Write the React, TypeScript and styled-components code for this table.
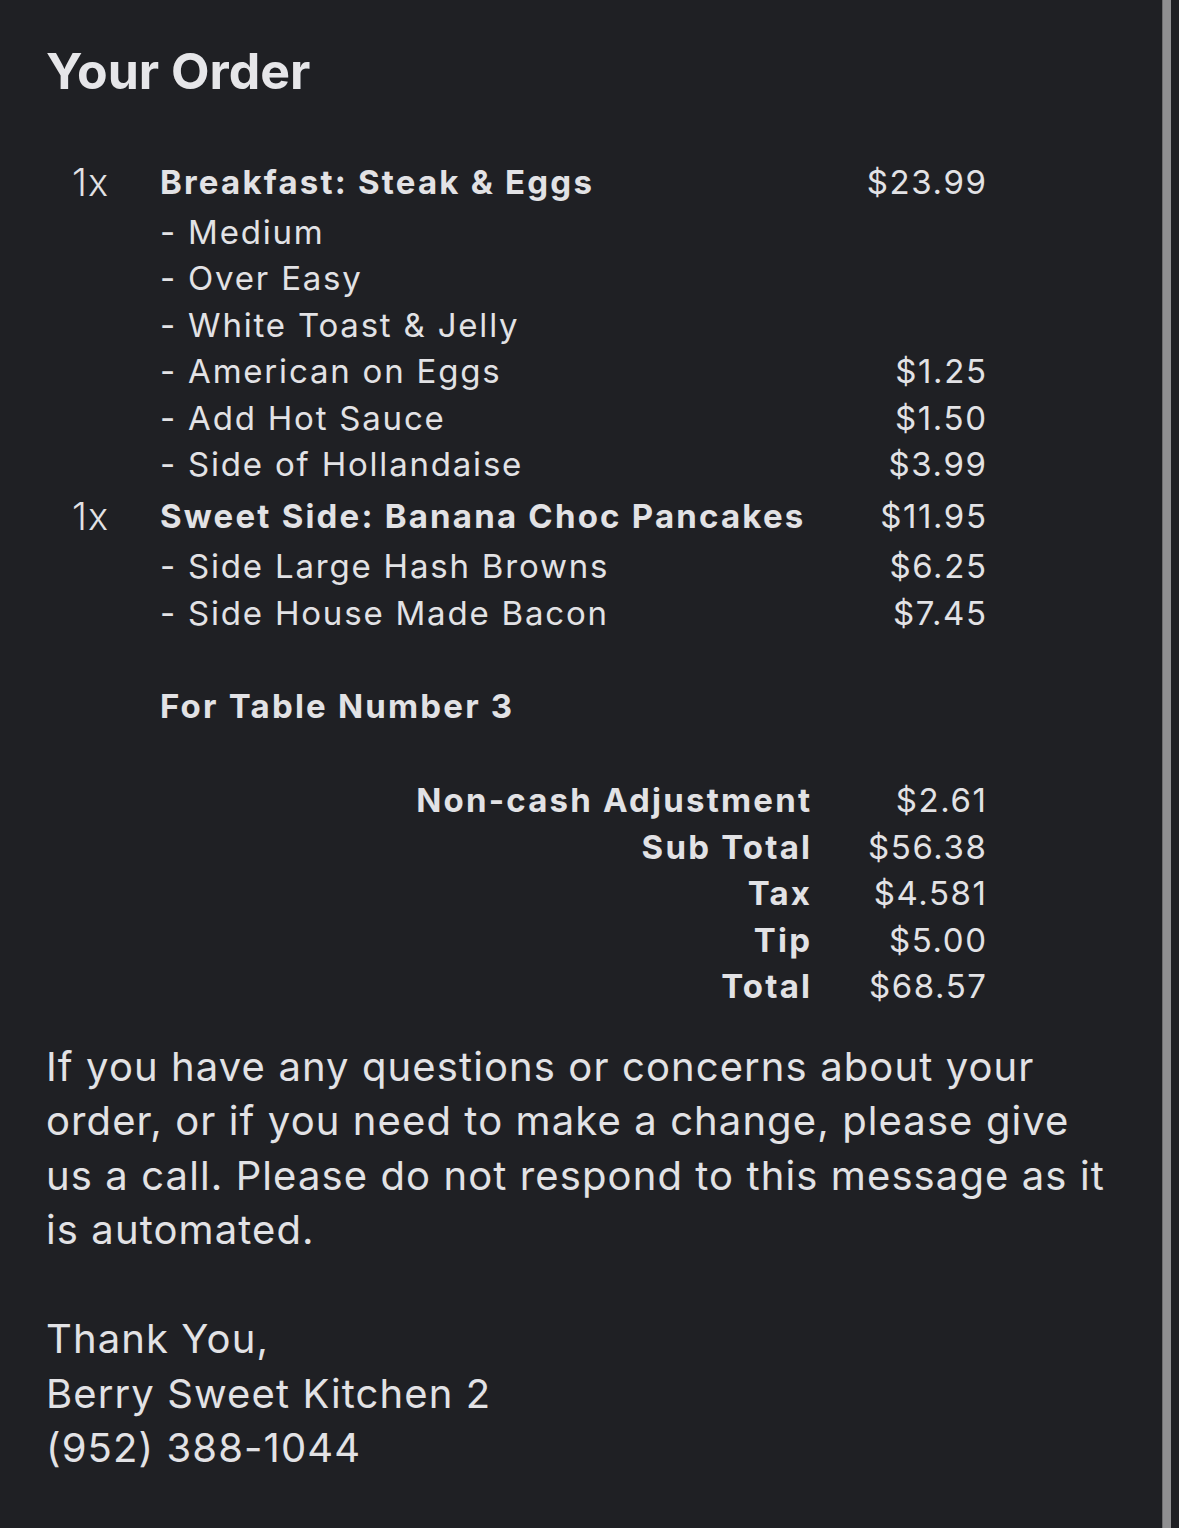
import styled, { createGlobalStyle } from "styled-components";

const GlobalStyle = createGlobalStyle`
  html, body {
    margin: 0;
    padding: 0;
    background: #1f2024;
  }
  body {
    font-family: Inter, "Noto Sans", sans-serif;
    color: #e2e2e5;
  }
`;

type Line = { text: string; price?: string };
type Item = { qty: string; name: string; price: string; options: Line[] };

const items: Item[] = [
  {
    qty: "1x",
    name: "Breakfast: Steak & Eggs",
    price: "$23.99",
    options: [
      { text: "- Medium" },
      { text: "- Over Easy" },
      { text: "- White Toast & Jelly" },
      { text: "- American on Eggs", price: "$1.25" },
      { text: "- Add Hot Sauce", price: "$1.50" },
      { text: "- Side of Hollandaise", price: "$3.99" },
    ],
  },
  {
    qty: "1x",
    name: "Sweet Side: Banana Choc Pancakes",
    price: "$11.95",
    options: [
      { text: "- Side Large Hash Browns", price: "$6.25" },
      { text: "- Side House Made Bacon", price: "$7.45" },
    ],
  },
];

const totals = [
  { label: "Non-cash Adjustment", value: "$2.61" },
  { label: "Sub Total", value: "$56.38" },
  { label: "Tax", value: "$4.581" },
  { label: "Tip", value: "$5.00" },
  { label: "Total", value: "$68.57" },
];

const App = () => {
  return (
    <Page>
      <GlobalStyle />
      <Main>
        <Title>Your Order</Title>
        <OrderList>
          {items.map((item, i) => (
            <ItemBlock key={i} $first={i === 0}>
              <HeadRow>
                <Qty>{item.qty}</Qty>
                <ItemName>{item.name}</ItemName>
                <Price>{item.price}</Price>
              </HeadRow>
              {item.options.map((opt, j) => (
                <OptionRow key={j}>
                  <span />
                  <OptionText>{opt.text}</OptionText>
                  <Price>{opt.price || ""}</Price>
                </OptionRow>
              ))}
            </ItemBlock>
          ))}
          <TableNote>
            <span />
            <ItemName>For Table Number 3</ItemName>
          </TableNote>
          <Totals>
            {totals.map((t) => (
              <TotalRow key={t.label}>
                <TotalLabel>{t.label}</TotalLabel>
                <Price>{t.value}</Price>
              </TotalRow>
            ))}
          </Totals>
        </OrderList>
        <Message>
          If you have any questions or concerns about your
          <br />
          order, or if you need to make a change, please give
          <br />
          us a call. Please do not respond to this message as it
          <br />
          is automated.
        </Message>
        <Signature>
          Thank You,
          <br />
          Berry Sweet Kitchen 2
          <br />
          (952) 388-1044
        </Signature>
      </Main>
      <ScrollTrack>
        <ScrollThumb />
      </ScrollTrack>
    </Page>
  );
};

export default App;

const Page = styled.div`
  display: flex;
  min-height: 100vh;
  background: #1f2024;
`;
const Main = styled.main`
  flex: 1;
  padding: 40px 0 60px 46px;
`;
const Title = styled.h1`
  margin: 0;
  font-size: 50px;
  font-weight: 700;
  line-height: 62px;
  color: #e6e6e9;
`;
const OrderList = styled.div`
  display: flex;
  flex-direction: column;
  margin-top: 53px;
  padding-left: 26px;
`;
const ItemBlock = styled.div<{ $first?: boolean }>`
  display: flex;
  flex-direction: column;
  margin-top: ${(p) => (p.$first ? "0" : "2px")};
`;
const HeadRow = styled.div`
  display: grid;
  grid-template-columns: 88px 650px 176px;
  height: 53.5px;
  align-items: center;
`;
const OptionRow = styled.div`
  display: grid;
  grid-template-columns: 88px 650px 176px;
  height: 46.5px;
  align-items: center;
`;
const Qty = styled.span`
  font-size: 38px;
  font-weight: 300;
  letter-spacing: 1px;
`;
const ItemName = styled.span`
  font-size: 33px;
  font-weight: 700;
  letter-spacing: 2.2px;
`;
const OptionText = styled.span`
  font-size: 33px;
  font-weight: 400;
  letter-spacing: 1.8px;
`;
const Price = styled.span`
  font-size: 33px;
  font-weight: 400;
  letter-spacing: 1.6px;
  text-align: right;
  margin-right: -1.6px;
`;
const TableNote = styled.div`
  display: grid;
  grid-template-columns: 88px 650px;
  margin-top: 47px;
  height: 46px;
  align-items: center;
`;
const Totals = styled.div`
  display: flex;
  flex-direction: column;
  margin-top: 48px;
`;
const TotalRow = styled.div`
  display: grid;
  grid-template-columns: 738px 176px;
  height: 46.5px;
  align-items: center;
`;
const TotalLabel = styled.span`
  font-size: 33px;
  font-weight: 700;
  text-align: right;
  letter-spacing: 2.2px;
  margin-right: -2.2px;
`;
const Message = styled.p`
  margin: 30px 0 0;
  font-size: 40px;
  line-height: 54.5px;
  letter-spacing: 1.1px;
`;
const Signature = styled.p`
  margin: 54.5px 0 0;
  font-size: 40px;
  line-height: 54.5px;
  letter-spacing: 1.1px;
`;
const ScrollTrack = styled.div`
  width: 17px;
  flex-shrink: 0;
  display: flex;
`;
const ScrollThumb = styled.div`
  width: 9px;
  background: #8f8f91;
  border-left: 1px solid #6e6e70;
  box-sizing: border-box;
`;
